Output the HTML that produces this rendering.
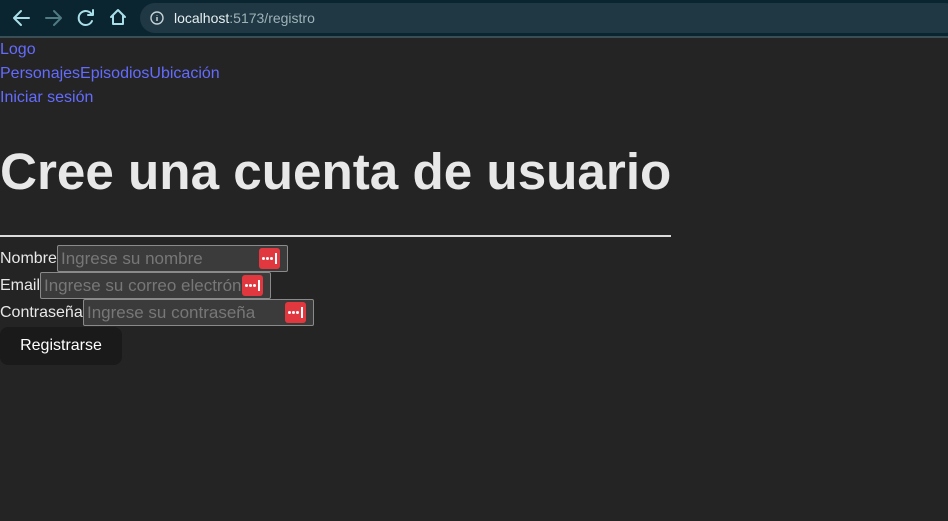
<!DOCTYPE html>
<html><head><meta charset="utf-8"><style>
*{box-sizing:border-box}
body{margin:0;width:948px;height:521px;background:#242424;font-family:"Liberation Sans",sans-serif;overflow:hidden;position:relative;color:rgba(255,255,255,.87)}
.bar{position:absolute;left:0;top:0;width:948px;height:37px;background:#0b2530}
.line{position:absolute;left:0;top:36px;width:948px;height:2px;background:#3a4e56}
.url{position:absolute;left:140px;top:3px;width:820px;height:30px;border-radius:15px;background:#1f3843}
.url span{position:absolute;left:34px;top:7px;font-size:14px;color:#9fb2b8}
.url b{font-weight:normal;color:#e6eef0}
.a{position:absolute;left:0;font-size:16px;color:#646cff;line-height:24px}
h1{position:absolute;left:0;top:140px;margin:0;font-size:51.2px;font-weight:bold;color:#e8e8e8;line-height:64px;white-space:nowrap}
.hr{position:absolute;left:0;top:235px;width:671px;height:2px;background:#dcdcdc}
.lab{position:absolute;left:0;font-size:16px;color:#e8e8e8}
.in{position:absolute;height:27px;width:231px;background:#3b3b3b;border:1px solid #8a8a8a;border-radius:2px;font-size:17px;color:#777;padding:3px 0 0 3px;white-space:nowrap;overflow:hidden}
.ic{position:absolute;top:2px;width:21px;height:21px;background:#e0383e;border-radius:3px}
.ic i{position:absolute;top:9px;width:3px;height:3px;background:#fff;border-radius:50%}
.ic s{position:absolute;top:5px;left:16px;width:2px;height:11px;background:#fff}
.btn{position:absolute;left:0;top:327px;width:122px;height:38px;background:#1a1a1a;border-radius:8px;color:#fff;font-size:16px;text-align:center;line-height:38px}
</style></head><body>
<div class="bar"></div>
<svg style="position:absolute;left:0;top:0" width="140" height="36" fill="none" stroke-linecap="round" stroke-linejoin="round" stroke-width="2">
<path d="M29 18H15M21 11l-7 7 7 7" stroke="#a9dfe8"/>
<path d="M46 18h14M54 11l7 7-7 7" stroke="#4f7b84"/>
<path d="M92 15a7 7 0 1 0 0 6M93 10v5h-5" stroke="#a9dfe8"/>
<path d="M111 17l7-7 7 7M113 15v9h10v-9" stroke="#a9dfe8"/>
</svg>
<div class="url"><svg style="position:absolute;left:10px;top:8px" width="14" height="14"><circle cx="7" cy="7" r="6" fill="none" stroke="#c5d2d6" stroke-width="1.4"/><path d="M7 6v4M7 4v.5" stroke="#c5d2d6" stroke-width="1.5"/></svg><span><b>localhost</b>:5173/registro</span></div>
<div class="line"></div>
<div class="a" style="top:38px">Logo</div>
<div class="a" style="top:62px">PersonajesEpisodiosUbicación</div>
<div class="a" style="top:86px">Iniciar sesión</div>
<h1>Cree una cuenta de usuario</h1>
<div class="hr"></div>
<div class="lab" style="top:250px">Nombre</div>
<div class="in" style="left:57px;top:245px">Ingrese su nombre<div class="ic" style="left:201px"><i style="left:3px"></i><i style="left:7px"></i><i style="left:11px"></i><s></s></div></div>
<div class="lab" style="top:277px">Email</div>
<div class="in" style="left:40px;top:272px">Ingrese su correo electrónico<div class="ic" style="left:201px"><i style="left:3px"></i><i style="left:7px"></i><i style="left:11px"></i><s></s></div></div>
<div class="lab" style="top:304px">Contraseña</div>
<div class="in" style="left:83px;top:299px">Ingrese su contraseña<div class="ic" style="left:201px"><i style="left:3px"></i><i style="left:7px"></i><i style="left:11px"></i><s></s></div></div>
<div class="btn">Registrarse</div>
</body></html>
